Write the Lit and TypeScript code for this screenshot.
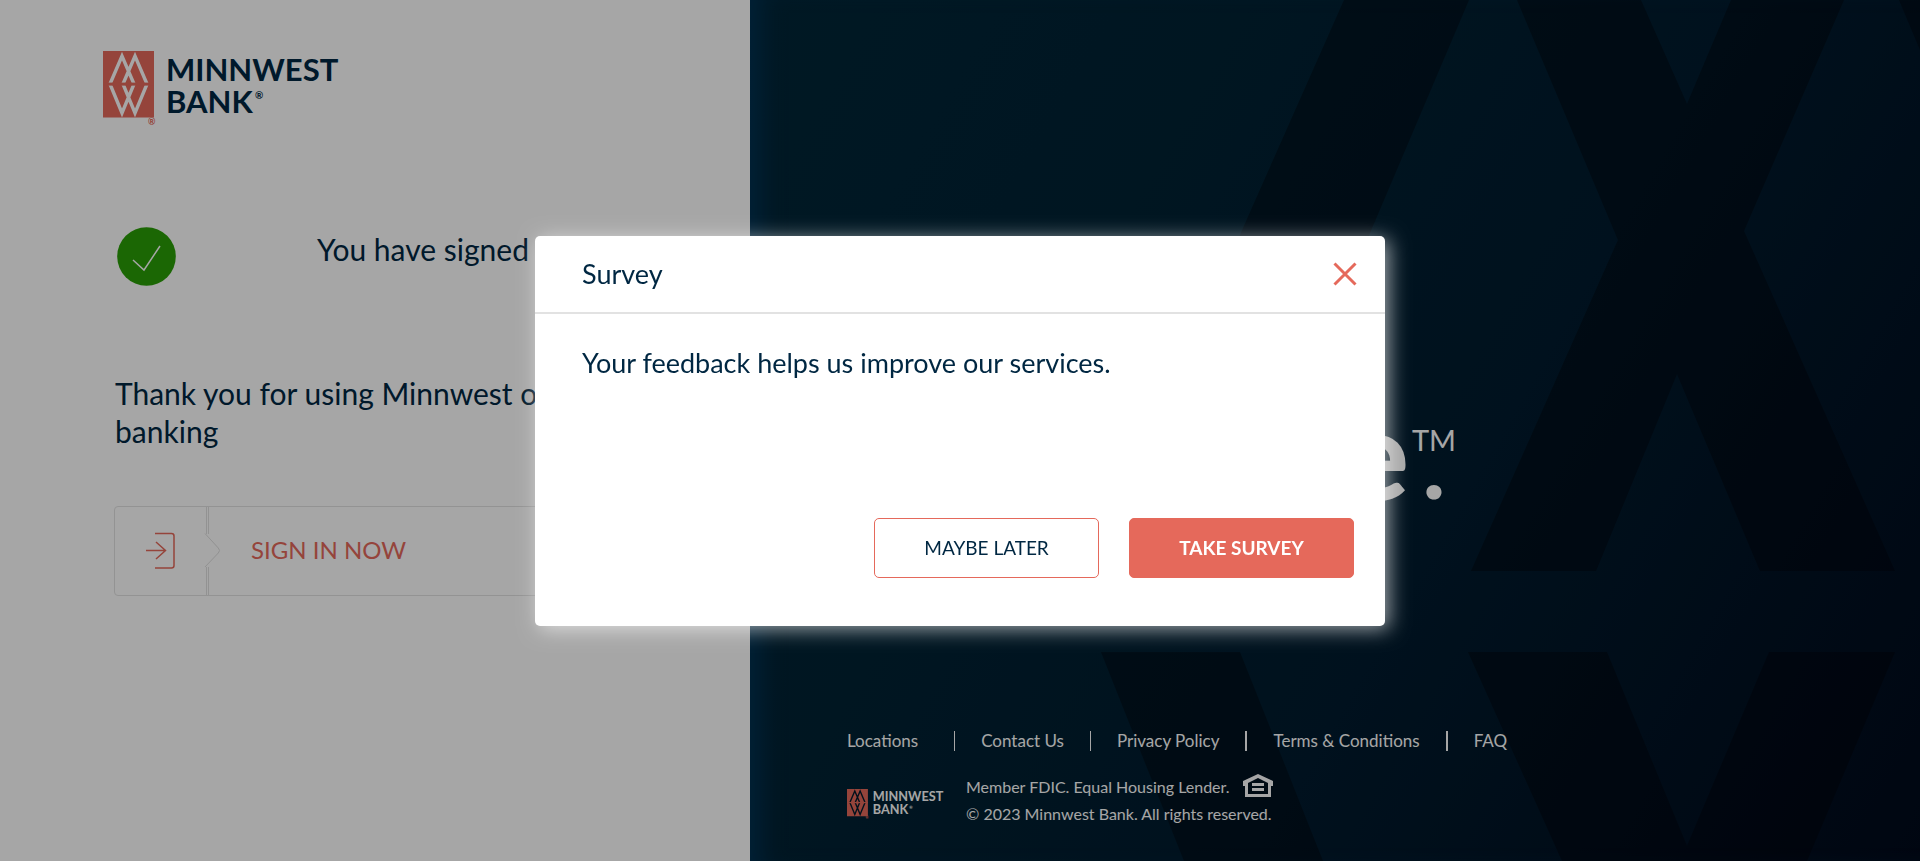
import { LitElement, html, css, svg } from "lit";
import { customElement, property, state } from "lit/decorators.js";

@customElement("bank-logo")
class BankLogo extends LitElement {
  @property({ type: Boolean, reflect: true }) inverse = false;

  static styles = css`
    :host { display: block; width: 244px; color: #002742; --mark-line: #fff; }
    :host([inverse]) { width: 100px; color: #fff; --mark-line: #001b2c; }
    .logo { display: block; width: 100%; height: auto; }
    .mark, .reg { fill: #e5695b; }
    .line { fill: none; stroke: var(--mark-line); stroke-width: 3.4; stroke-miterlimit: 8; }
    .word { fill: currentColor; font: 700 31px Lato, sans-serif; }
    .tiny { fill: currentColor; font: 700 10px Lato, sans-serif; }
    .reg { font: 700 9px Lato, sans-serif; }
  `;

  render() {
    return html`
      <svg class="logo" viewBox="0 0 244 75" role="img" aria-label="Minnwest Bank">
        ${svg`
          <rect class="mark" width="51" height="66.5"></rect>
          <path class="line" d="M7 33 19 5 31 33M20 33 32 5 44 33M7 33 19 62 31 33M20 33 32 62 44 33"></path>
          <rect class="mark" y="31.6" width="51" height="3"></rect>
          <text class="reg" x="45" y="74">®</text>
          <text class="word" x="63" y="30">MINNWEST</text>
          <text class="word" x="63" y="62">BANK</text>
          <text class="tiny" x="152" y="48">®</text>
        `}
      </svg>`;
  }
}

@customElement("survey-dialog")
class SurveyDialog extends LitElement {
  static styles = css`
    :host {
      position: fixed; inset: 0; display: flex; align-items: center; justify-content: center;
      background: rgba(0, 0, 0, 0.35);
    }
    .dialog {
      box-sizing: border-box; display: flex; flex-direction: column;
      width: min(850px, 92vw); min-height: 390px; border-radius: 5px;
      background: #fff; color: #002742; box-shadow: 4px 3px 20px rgba(255, 255, 255, 0.62);
    }
    .head {
      display: flex; align-items: center; justify-content: space-between;
      padding: 21px 28px 21px 47px; border-bottom: 2px solid #e2e2e2;
    }
    .title, .message { margin: 0; font-size: 27px; line-height: 34px; font-weight: 400; }
    .message { padding: 32px 47px; }
    .close { display: flex; padding: 0; border: 0; background: none; cursor: pointer; }
    .cross { width: 24px; height: 24px; stroke: #e5695b; stroke-width: 3; }
    .actions { display: flex; flex-wrap: wrap; justify-content: flex-end; gap: 30px; margin-top: auto; padding: 0 31px 48px; }
    .action {
      width: 225px; height: 60px; border: 1px solid #e5695b; border-radius: 5px;
      background: #fff; color: #002742; font: 400 19px Lato, sans-serif; cursor: pointer;
    }
    .primary { background: #e5695b; color: #fff; font-weight: 700; }
  `;

  private dismiss() {
    this.dispatchEvent(new CustomEvent("dismiss"));
  }

  render() {
    return html`
      <section class="dialog" role="dialog" aria-modal="true" aria-labelledby="title">
        <header class="head">
          <h2 class="title" id="title">Survey</h2>
          <button class="close" aria-label="Close" @click=${this.dismiss}>
            <svg class="cross" viewBox="0 0 24 24"><path d="M1.5 1.5l21 21M22.5 1.5l-21 21"></path></svg>
          </button>
        </header>
        <p class="message">Your feedback helps us improve our services.</p>
        <div class="actions">
          <button class="action" @click=${this.dismiss}>MAYBE LATER</button>
          <button class="action primary" @click=${this.dismiss}>TAKE SURVEY</button>
        </div>
      </section>`;
  }
}

const LINKS = ["Locations", "Contact Us", "Privacy Policy", "Terms & Conditions", "FAQ"];

@customElement("app-root")
class AppRoot extends LitElement {
  @state() private surveyOpen = true;

  static styles = css`
    :host {
      display: grid; grid-template-columns: 25fr 39fr; min-height: 100vh;
      font-family: Lato, "Open Sans", sans-serif; color: #002742; background: #fff;
    }
    a { color: inherit; text-decoration: none; }
    .account { padding: 51px 115px 40px 103px; }
    .content { display: flex; flex-direction: column; padding: 101px 0 0 12px; }
    .status { display: flex; align-items: flex-start; gap: 141px; padding-left: 2px; }
    .tick { flex: none; width: 59px; height: 59px; }
    .disc { fill: #2a9f07; }
    .check { fill: none; stroke: #fff; stroke-width: 1.5; }
    .heading { margin: 0; padding-top: 3px; font-size: 30px; line-height: 38px; font-weight: 400; }
    .thanks { margin-top: 85px; }
    .signin {
      display: flex; align-items: center; gap: 30px; height: 88px; margin: 56px 0 0 -1px;
      border: 1px solid #e2e2e2; border-radius: 4px; color: #e5695b; font-size: 24px;
    }
    .signin-label { padding-bottom: 4px; }
    .arrow { flex: none; width: 106px; height: 88px; fill: none; }
    .edge { stroke: #e0e0e0; }
    .door { stroke: #e5695b; stroke-width: 1.5; }

    .brand {
      position: relative; display: flex; flex-direction: column; justify-content: space-between;
      overflow: hidden; padding: 0 40px 34px 97px; color: #fff;
      background: linear-gradient(120deg, #002638 0%, #002234 30%, #001b2e 60%, #000a1b 100%);
      box-shadow: inset 26px 0 24px -16px #003355;
    }
    .pattern { position: absolute; inset: 0; width: 100%; height: 100%; fill: #000006; fill-opacity: 0.36; }
    .slogan {
      position: relative; display: flex; justify-content: flex-end; align-items: flex-start; gap: 3px;
      max-width: 609px; margin: 0; padding-top: 377px; font-size: 124px; line-height: 150px; font-weight: 900;
    }
    .end { display: flex; flex-direction: column; align-items: center; padding-top: 44px; }
    .tm { font-size: 29px; line-height: 38px; font-weight: 400; }
    .stop { font-size: 92px; line-height: 10px; }
    .foot { position: relative; display: grid; gap: 22px; }
    .links { display: flex; flex-wrap: wrap; font-size: 17px; line-height: 20px; }
    .link { padding: 0 26px; border-left: 1px solid #fff; }
    .link:first-child { padding: 0 36px 0 0; border-left: 0; }
    .link:nth-child(n + 4) { border-left-width: 2px; }
    .legal { display: flex; align-items: center; gap: 19px; font-size: 16px; line-height: 27px; }
    .legal-logo { margin-top: 8px; }
    .legal-text { margin: 0; }
    .house { width: 30px; height: 24px; margin-left: 9px; vertical-align: -5px; }
  `;

  render() {
    return html`
      <main class="account">
        <bank-logo></bank-logo>
        <div class="content">
          <div class="status">
            <svg class="tick" viewBox="0 0 59 59" aria-hidden="true">
              <circle class="disc" cx="29.5" cy="29.5" r="29.3"></circle>
              <path class="check" d="M16 33l11 10L43 19"></path>
            </svg>
            <h1 class="heading">You have signed out</h1>
          </div>
          <p class="heading thanks">Thank you for using Minnwest online banking</p>
          <a class="signin" href="#signin">
            <svg class="arrow" viewBox="0 0 106 88" aria-hidden="true">
              <path class="edge" d="M91.5 0v27M93.5 0v27M91.5 60v28M93.5 60v28M90 26.500l13.300 14.500q2.500 2.500 0 5L90 60"></path>
              <path class="door" d="M40 26.500h16.500q2.500 0 2.500 2.500v29.500q0 2.500-2.500 2.500H40M31 43.500h19.500M41 35l9.500 8.500L41 52"></path>
            </svg>
            <span class="signin-label">SIGN IN NOW</span>
          </a>
        </div>
      </main>
      <aside class="brand">
        <svg class="pattern" viewBox="0 0 1170 861" preserveAspectRatio="xMaxYMin slice" aria-hidden="true">
          <path d="M594 0H719L620 233 540 440H405L493 228Z"></path>
          <path d="M767 0H891L937 104 981 0H1094L994 231 1145 571H1010L927 374 846 571H721L868 240Z"></path>
          <path d="M1149 0H1170V50Z"></path>
          <path d="M351 652H490L573 861H434Z"></path>
          <path d="M718 652H857L937 846 1019 652H1145L1057 861H812Z"></path>
        </svg>
        <p class="slogan">
          <span>e</span>
          <span class="end"><span class="tm">TM</span><span class="stop">.</span></span>
        </p>
        <footer class="foot">
          <nav class="links">
            ${LINKS.map((label) => html`<a class="link" href="#">${label}</a>`)}
          </nav>
          <div class="legal">
            <bank-logo class="legal-logo" inverse></bank-logo>
            <p class="legal-text">
              Member FDIC. Equal Housing Lender.
              <svg class="house" viewBox="0 0 30 24" role="img" aria-label="Equal Housing Lender">
                <path fill="#fff" fill-rule="evenodd" d="M15 0L0 7v5h2v11h26V12h2V7ZM15 4l10 5v11H5V9ZM9 9h12v3H9ZM9 14h12v3H9Z"></path>
              </svg><br />
              © 2023 Minnwest Bank. All rights reserved.
            </p>
          </div>
        </footer>
      </aside>
      ${this.surveyOpen
        ? html`<survey-dialog @dismiss=${() => { this.surveyOpen = false; }}></survey-dialog>`
        : ""}`;
  }
}
